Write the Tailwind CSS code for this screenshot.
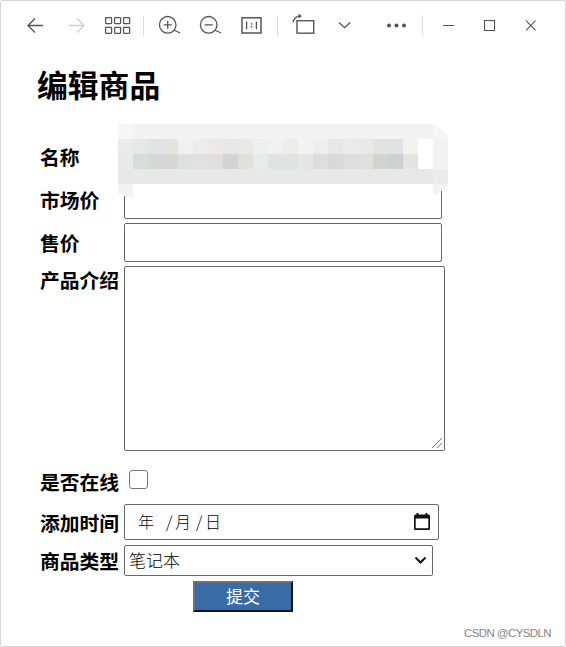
<!DOCTYPE html>
<html lang="zh-CN">
<head>
<meta charset="utf-8">
<title>编辑商品</title>
<script src="https://cdn.jsdelivr.net/npm/@tailwindcss/browser@4"></script>
</head>
<body class="bg-white">
<div class="relative flex h-[647px] w-[566px] flex-col overflow-hidden rounded-[2px] border border-[#d4d4d4] bg-white font-['Liberation_Sans','Noto_Sans_CJK_SC',sans-serif] text-black">
  <header class="h-[49px] shrink-0 text-[#555]">
    <svg class="block" width="564" height="49" viewBox="1 1 564 49" fill="none" stroke="currentColor" stroke-width="1.3">
      <path d="M43 25.5H28M35 18.5L28 25.5L35 32.5"/>
      <path stroke="#cfcfcf" d="M69 25.5H84M77 18.5L84 25.5L77 32.5"/>
      <g>
        <rect x="105.600" y="17.600" width="6" height="6" rx=".5"/><rect x="114.600" y="17.600" width="6" height="6" rx=".5"/><rect x="123.600" y="17.600" width="6" height="6" rx=".5"/>
        <rect x="105.600" y="27.300" width="6" height="6" rx=".5"/><rect x="114.600" y="27.300" width="6" height="6" rx=".5"/><rect x="123.600" y="27.300" width="6" height="6" rx=".5"/>
      </g>
      <path stroke="#dedede" stroke-width="1" d="M143.500 16V36M277.500 16V36M422.500 15V35"/>
      <circle cx="167.700" cy="24.800" r="8.300"/><path d="M163.700 24.800H171.700M167.700 20.800V28.800M173.800 30L180 33"/>
      <circle cx="208.700" cy="24.800" r="8.300"/><path d="M204.700 24.800H212.700M214.800 30L221 33"/>
      <rect x="242" y="17.800" width="19" height="15.200" stroke-width="1.500"/><path d="M246.600 21.500V29.200M256.400 21.500V29.200M251.500 23V24.700M251.500 26V27.700"/>
      <rect x="297" y="20.700" width="16.700" height="12.500" stroke-width="1.400"/><path d="M293.200 22.500C293.500 18.500 296 16.400 300 16.100"/><path fill="currentColor" stroke="none" d="M298.300 13.800L302 16L298.700 18.500Z"/>
      <path d="M339 22.500L344.600 27.700L350.200 22.500"/>
      <g fill="currentColor" stroke="none"><circle cx="389" cy="25.500" r="2"/><circle cx="396.500" cy="25.500" r="2"/><circle cx="404" cy="25.500" r="2"/></g>
      <path stroke-width="1.100" d="M443 25.500H454M526 20.700L535.500 30.300M535.500 20.700L526 30.300"/>
      <rect x="484.500" y="20.500" width="10" height="10" stroke-width="1.100"/>
    </svg>
  </header>
  <h1 class="mt-[14px] ml-[36px] h-[46px] text-[30.800px] leading-[46px] font-bold">编辑商品</h1>
  <form class="mt-[27px] ml-[39px] flex w-[420px] flex-col text-[19.800px] font-bold">
    <div class="relative flex h-[43px]">
      <label class="w-[84px] leading-[43px]">名称</label>
      <svg class="absolute top-[-13px] left-[78px] z-10" width="330" height="75" viewBox="0 0 330 75" shape-rendering="crispEdges">
        <path fill="#f3f3f3" d="M15 0H315V15H15Z"/><path fill="#f7f7f7" d="M0 0H15V15H0ZM315 0Q325 4 330 12V15H315Z"/>
        <g id="mosaic"></g>
        <path fill="#e8e8e8" d="M0 45H315V60H0Z"/><path fill="#ebebeb" d="M315 45H330V60H315Z"/>
        <path fill="#f3f3f3" d="M0 60H15V73.500L9 73L0 69ZM315 60H330V61Q324 68 315 71.500Z"/>
      </svg>
    </div>
    <div class="flex h-[43px]">
      <label class="w-[84px] leading-[42px]">市场价</label>
      <input class="h-[39px] w-[318px] rounded-[2px] border border-[#686868]">
    </div>
    <div class="flex h-[43px]">
      <label class="w-[84px] leading-[43px]">售价</label>
      <input class="h-[39px] w-[318px] rounded-[2px] border border-[#686868]">
    </div>
    <div class="flex h-[204px]">
      <label class="w-[84px] leading-[31px]">产品介绍</label>
      <div class="flex h-[185px] w-[321px] items-end justify-end rounded-[2px] border border-[#686868] p-[1px]">
        <svg width="12" height="12" viewBox="0 0 12 12" fill="none" stroke="#777" stroke-width="1"><path d="M1 11L11 1M6 11L11 6"/></svg>
      </div>
    </div>
    <div class="flex h-[34px]">
      <label class="w-[84px] leading-[26px]">是否在线</label>
      <span class="ml-[5px] h-[19px] w-[19px] rounded-[3px] border border-[#777]"></span>
    </div>
    <div class="flex h-[41px]">
      <label class="w-[84px] leading-[40px]">添加时间</label>
      <div class="flex h-[36px] w-[315px] items-center rounded-[2px] border border-[#686868] pr-[8px] pl-[13px] font-['Noto_Sans_CJK_SC',sans-serif] text-[16px] leading-[32px] font-light">
        <span class="mb-[2px] w-[28px]">年</span><span class="mb-[2px] w-[9px]">/</span><span class="mb-[2px] w-[21px]">月</span><span class="mb-[2px] w-[9px]">/</span><span class="mb-[2px]">日</span>
        <svg class="ml-auto" width="16" height="18" viewBox="0 0 16 18"><path fill="#111" fill-rule="evenodd" d="M2.500 0H4.500V1.500H11.500V0H13.500V1.500H14.500Q16 1.500 16 3V15.500Q16 17 14.500 17H1.500Q0 17 0 15.500V3Q0 1.500 1.500 1.500H2.500ZM1.700 5.500V15.300H14.300V5.500Z"/></svg>
      </div>
    </div>
    <div class="flex h-[36px]">
      <label class="w-[84px] leading-[34px]">商品类型</label>
      <div class="flex h-[31px] w-[309px] items-center rounded-[2px] border border-[#686868] pr-[5px] pl-[4px] text-[17px] leading-[29px] font-light">
        <span class="mt-[2px]">笔记本</span>
        <svg class="ml-auto" width="13" height="9" viewBox="0 0 13 9" fill="none" stroke="#111" stroke-width="2"><path d="M1.500 1.500L6.500 6.500L11.500 1.500"/></svg>
      </div>
    </div>
    <button type="button" class="ml-[153px] flex h-[31px] w-[100px] items-center justify-center border-2 border-t-[#68717c] border-r-[#10151c] border-b-[#10151c] border-l-[#68717c] bg-[#396ba5] pt-[2px] text-[17px] font-normal text-white">提交</button>
  </form>
  <div class="absolute right-[14px] bottom-[5px] text-[11.500px] leading-[16px] tracking-[-0.600px] text-[#858585]">CSDN @CYSDLN</div>
</div>
<script>
const rows = [
  "ebebeb e6e8e7 e0e4e2 e4e4e1 f1f1f1 ededed ebeae7 e7e7e7 e9e9e6 efefef f1f1f1 edecea f3f3f3 eeeeee e7e7e7 ecebe9 e9e9e6 e3e4e1 e1e2e2 f3f3f0 ffffff f3f3f3",
  "e9e9e9 d9dcda d5d8d5 d8d6d2 dde0df e0e1e0 e0e0e0 d3d3d3 dfdfde e8ebea e1e3e2 e1e3e2 e6e6e6 dcdddc d8d9d8 dcdddc dfdfdf d2d2d1 cfd1d0 e3e3e0 ffffff f3f3f3"
];
document.getElementById("mosaic").innerHTML = rows.map((r, y) => r.split(" ").map((c, x) =>
  `<rect x="${x * 15}" y="${15 + y * 15}" width="15" height="15" fill="#${c}"/>`).join("")).join("");
</script>
</body>
</html>
